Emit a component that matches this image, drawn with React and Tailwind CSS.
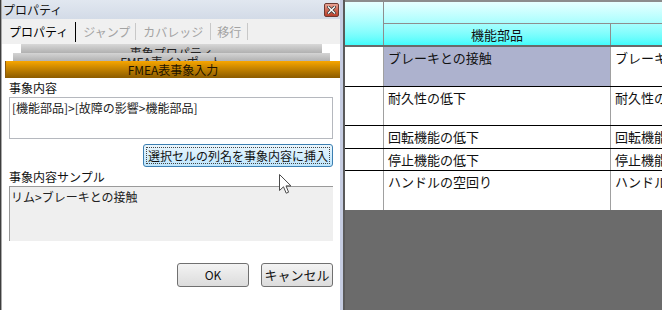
import React from "react";

const JP = { fontFamily: '"Noto Sans CJK JP", "Noto Sans", sans-serif' };

function CloseButton() {
  return (
    <div className="w-[15px] h-[14px] rounded-[2px] border border-[#6e3a32] bg-gradient-to-b from-[#e8a496] via-[#d06a56] to-[#b8402c] flex items-center justify-center">
      <svg width="9" height="8" viewBox="0 0 9 8">
        <path d="M1.5 1 L7.5 7 M7.5 1 L1.5 7" stroke="#3a3a3a" strokeWidth="3" strokeLinecap="square" />
        <path d="M1.5 1 L7.5 7 M7.5 1 L1.5 7" stroke="#ffffff" strokeWidth="1.4" strokeLinecap="square" />
      </svg>
    </div>
  );
}

function Cursor() {
  return (
    <svg width="13" height="21" viewBox="0 0 13 21" className="absolute left-[277px] top-[130px]">
      <path
        d="M0.5 0.5 L0.5 16.5 L4.5 12.8 L7.2 19.2 L9.6 18.2 L7 11.9 L12 11.9 Z"
        fill="#ffffff"
        stroke="#4a4a4a"
        strokeWidth="1"
        strokeLinejoin="round"
      />
    </svg>
  );
}

function LeftPanel() {
  return (
    <div className="w-[340px] h-full flex flex-col border-l border-[#3e3e3e] shrink-0" style={JP}>
      <div className="h-full flex flex-col border-l border-[#a9a9a9]">
        {/* title bar */}
        <div className="h-[19px] flex items-center justify-between pl-[1px] pr-[1px] bg-gradient-to-b from-[#e1e7f0] to-[#d3dbe7]">
          <span className="text-[12px] leading-[16px] text-[#111]">プロパティ</span>
          <CloseButton />
        </div>
        {/* tabs */}
        <div className="h-[25px] bg-[#f0f0f0] flex items-center text-[12px] leading-[16px]">
          <span className="ml-[7px] text-black">プロパティ</span>
          <span className="ml-[7px] w-px h-[20px] bg-black" />
          <span className="ml-[7px] text-[#a3a3a3]">ジャンプ</span>
          <span className="ml-[5px] w-px h-[17px] bg-[#c8c8c8]" />
          <span className="ml-[7px] text-[#a3a3a3]">カバレッジ</span>
          <span className="ml-[7px] w-px h-[17px] bg-[#c8c8c8]" />
          <span className="ml-[6px] text-[#a3a3a3]">移行</span>
          <span className="ml-[6px] w-px h-[17px] bg-[#c8c8c8]" />
        </div>
        {/* body */}
        <div className="flex-1 bg-white flex flex-col relative">
          <div className="ml-[19px] mr-[18px] h-[17px] bg-gradient-to-b from-[#d8d8d8] to-[#8e8e8e] text-center text-[12px] leading-[17px] text-[#222] overflow-hidden">
            事象プロパティ
          </div>
          <div className="-mt-[8px] ml-[11px] mr-[10px] h-[17px] bg-gradient-to-b from-[#d4d4d4] to-[#8e8e8e] text-center text-[12px] leading-[17px] text-[#222] overflow-hidden">
            FMEA表インポート
          </div>
          <div className="-mt-[9px] ml-[3px] h-[17px] border-l border-[#8a5a10] bg-gradient-to-b from-[#f8a600] to-[#8c5c00] text-center text-[12px] leading-[17px] text-[#1e1400]">
            FMEA表事象入力
          </div>

          <div className="px-[7px] flex flex-col">
            <div className="text-[12px] leading-[18px] text-[#111] mt-[1px]">事象内容</div>
            <div className="h-[42px] border border-[#b5b8be] px-[2px] pt-[2px] text-[12px] leading-[16px] text-[#222]">
              [機能部品]&gt;[故障の影響&gt;機能部品]
            </div>
            <div className="flex justify-end mt-[5px]">
              <div className="w-[190px] h-[23px] rounded-[3px] border border-[#3c7fb1] bg-gradient-to-b from-[#eaf6fd] to-[#bee6fd] p-[2px] flex">
                <div className="flex-1 border border-dotted border-[#444] flex items-center justify-center text-[12px] leading-[14px] text-[#111] whitespace-nowrap">
                  選択セルの列名を事象内容に挿入
                </div>
              </div>
            </div>
            <div className="text-[12px] leading-[18px] text-[#111] mt-[1px]">事象内容サンプル</div>
            <div className="h-[55px] border-l border-t border-[#9a9a9a] bg-[#efefef] px-[1px] pt-[2px] text-[12px] leading-[16px] text-[#222]">
              リム&gt;ブレーキとの接触
            </div>
            <div className="flex justify-end gap-[12px] mt-[22px]">
              <div className="w-[72px] h-[24px] rounded-[3px] border border-[#707070] bg-gradient-to-b from-[#f3f3f3] to-[#dcdcdc] flex items-center justify-center text-[12px] text-[#111]">
                OK
              </div>
              <div className="w-[72px] h-[24px] rounded-[3px] border border-[#707070] bg-gradient-to-b from-[#f3f3f3] to-[#dcdcdc] flex items-center justify-center text-[13px] text-[#111] whitespace-nowrap">
                キャンセル
              </div>
            </div>
          </div>
          <Cursor />
        </div>
      </div>
    </div>
  );
}

const rows = [
  { h: "h-[40px]", a: "ブレーキとの接触", b: "ブレーキとの接触", sel: true, line: true },
  { h: "h-[39px]", a: "耐久性の低下", b: "耐久性の低下", line: true },
  { h: "h-[23px]", a: "回転機能の低下", b: "回転機能の低下", line: true },
  { h: "h-[22px]", a: "停止機能の低下", b: "停止機能の低下", line: true },
  { h: "h-[39px]", a: "ハンドルの空回り", b: "ハンドルの空回り", line: false },
];

function Grid() {
  return (
    <div className="flex-1 h-full flex flex-col border-l-2 border-[#5a5a5a] overflow-hidden" style={JP}>
      <div className="border-t-2 border-[#8c8c8c] h-[47px] border-b-2 border-b-[#6a6a6a] bg-gradient-to-b from-[#e6ffff] to-[#3ffcfc] flex">
        <div className="w-[39px] border-r border-[#8e8e8e] shrink-0" />
        <div className="flex-1 flex flex-col">
          <div className="h-[22px] border-b border-[#8e8e8e]" />
          <div className="flex-1 flex">
            <div className="w-[227px] border-r border-[#8e8e8e] shrink-0 flex items-center justify-center text-[13px] text-[#111]">
              機能部品
            </div>
            <div className="flex-1" />
          </div>
        </div>
      </div>
      <div className="bg-white flex flex-col">
        {rows.map((r, i) => (
          <div key={i} className={`${r.h} flex ${r.line ? "border-b border-black" : ""}`}>
            <div className="w-[39px] border-r border-[#a0a0a0] shrink-0" />
            <div
              className={`w-[227px] shrink-0 border-r border-[#a0a0a0] pl-[4px] pt-[3px] text-[13px] leading-[16px] text-[#111] whitespace-nowrap ${
                r.sel ? "bg-[#adb2ce]" : ""
              }`}
            >
              {r.a}
            </div>
            <div className="flex-1 pl-[4px] pt-[3px] text-[13px] leading-[16px] text-[#111] whitespace-nowrap overflow-hidden">
              {r.b}
            </div>
          </div>
        ))}
      </div>
      <div className="flex-1 bg-[#6b6b6b]" />
    </div>
  );
}

export default function App() {
  return (
    <div className="w-[662px] h-[310px] flex overflow-hidden bg-white relative">
      <LeftPanel />
      <div className="w-[3px] h-full bg-[#c6cde2] shrink-0" />
      <Grid />
    </div>
  );
}
